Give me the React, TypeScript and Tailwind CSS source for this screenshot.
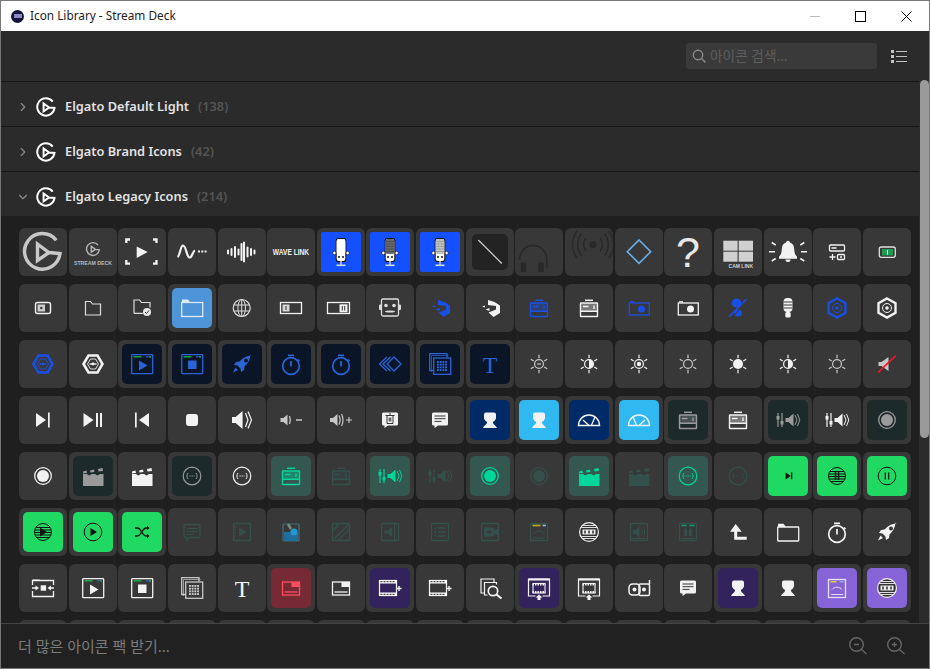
import type { ReactNode } from "react"
import { ChevronDown, ChevronRight } from "lucide-react"

/** Part of an icon that is filled with the tile's colour. */
function Fill({ children }: { children: ReactNode }) {
  return <g fill="currentColor" stroke="none">{children}</g>
}

const logoPath = "M37.3 12.3A17.8 17.8 0 1 0 41 25.5L30 24.5L18.5 16V32.5L30 24.5"

function Mic({ head, grain }: { head: string; grain?: string }) {
  return (
    <g stroke="none">
      <circle cx="17.5" cy="25" r="1.8" fill="#fff" stroke="#111" strokeWidth=".6" />
      <circle cx="30.5" cy="25" r="1.8" fill="#fff" stroke="#111" strokeWidth=".6" />
      <rect x="18.7" y="10" width="10.6" height="24" rx="2.8" fill="#111" />
      <rect x="19.7" y="11" width="8.6" height="22" rx="2" fill="#fff" />
      <rect x="19.7" y="11" width="8.6" height="15" rx="2" fill={head} />
      {grain && <path d="M20.5 13.5h7M20.5 16h7M20.5 18.5h7M20.5 21h7M20.5 23.5h7" stroke={grain} strokeWidth="1" strokeDasharray="1 1" />}
      <circle cx="22" cy="29" r="1" fill="#111" />
      <circle cx="26" cy="29" r="1" fill="#111" />
      <rect x="23" y="33" width="2" height="4" fill="#aab" />
      <rect x="19.5" y="36.5" width="9" height="1.6" fill="#cdd" />
    </g>
  )
}

function Sun({ children }: { children: ReactNode }) {
  return (
    <>
      <path d="M24 14.8v3.4M24 29.8v3.4M15.8 19.3l3 1.7M32.2 19.3l-3 1.7M15.8 28.7l3-1.7M32.2 28.7l-3-1.7" strokeWidth="1.2" />
      {children}
    </>
  )
}

/** Square window used by the dim icons of row six. */
function Box({ children }: { children: ReactNode }) {
  return (
    <>
      <rect x="15.5" y="15.5" width="17" height="17" rx=".8" strokeWidth="1.3" />
      {children}
    </>
  )
}

/** Window with the two coloured bars on top. */
function Win({ children, left = "#1fc24a", right = "#2a6bd6" }: { children: ReactNode; left?: string; right?: string }) {
  return (
    <>
      <rect x="13.7" y="14.7" width="21" height="19" rx=".8" strokeWidth="1.3" />
      <path d="M15.5 16.8h8" stroke={left} strokeWidth="1.2" />
      <path d="M28 16.8h2.5" stroke={right} strokeWidth="1.2" />
      <path d="M31 16.8h2" stroke={left} strokeWidth="1.2" />
      {children}
    </>
  )
}

const speaker = "M14 21h3.6l7-6v18l-7-6H14z"
const chatBubble = "M17.5 16.5h13a1.5 1.5 0 0 1 1.5 1.5v10a1.5 1.5 0 0 1-1.5 1.5H22l-3.5 2.5v-2.5h-1a1.5 1.5 0 0 1-1.5-1.5V18a1.5 1.5 0 0 1 1.5-1.5z"
const person = "M20 16.5h8a2 2 0 0 1 2 2V22c0 2-2 3-3 4v.5c0 2 3 3 4 5.5H17c1-2.5 4-3.5 4-5.5V26c-1-1-3-2-3-4v-3.5a2 2 0 0 1 2-2z"
const rocket = "M33.5 15.5c-5 .3-9 2.5-12 6l-3.5.5-2 3 3.5.5 3 3 .5 3.5 3-2 .5-3.5c3.5-3 5.7-7 6-12zM28 18.5a2 2 0 1 1 0 4 2 2 0 0 1 0-4zM17.5 27.5l-2.5 5 5-2.5z"
const clapTop = "M14 19.5l3.5-1 .5 2.5-4 .5zM21 18.5l4-1 .5 2.5-4 .5zM29 17l4.5-1 .5 3-4.5.5z"

function Stopwatch() {
  return (
    <>
      <circle cx="24" cy="26" r="8.3" strokeWidth="1.7" />
      <path d="M21 15.3h6M24 21v5.5M31 19.5l1.5 1.5" strokeWidth="1.7" />
    </>
  )
}

function StackGrid() {
  const dots = [0, 1, 2, 3]
  return (
    <>
      <path d="M17 30.5h-3.3V13.7H31v3.8" strokeWidth="1.3" />
      <path d="M15.5 32V15.5h17" strokeWidth="1" opacity=".7" />
      <rect x="17.7" y="18" width="17" height="16.3" strokeWidth="1.3" />
      <Fill>
        {dots.map((r) => dots.map((c) => <rect key={`${r}-${c}`} x={21 + c * 2.7} y={21 + r * 2.7} width="1.9" height="1.9" />))}
      </Fill>
    </>
  )
}

function Stripes() {
  return (
    <>
      <circle cx="24" cy="24" r="8.5" strokeWidth="1" />
      <path d="M17 19.5h14M16 22h16M16 24.5h16M16 27h16M17.5 29.5h13" strokeWidth="1" />
    </>
  )
}

function Film() {
  return (
    <>
      <rect x="13.5" y="16.5" width="17" height="15" strokeWidth="1.2" />
      <rect x="13" y="16" width="18" height="3.5" fill="#fff" stroke="none" />
      <rect x="13" y="28.5" width="18" height="3.5" fill="#fff" stroke="none" />
      <path d="M14.5 17.7h15M14.5 30.3h15" stroke="#444" strokeWidth="1.3" strokeDasharray="2 1" />
      <path d="M33 22v5M30.5 24.5h5" strokeWidth="1.4" />
    </>
  )
}

function SceneUp() {
  return (
    <>
      <path d="M20.5 32h-7V15h21v17h-7" strokeWidth="1.2" />
      <rect x="13.5" y="14.5" width="21" height="2" fill="currentColor" stroke="none" />
      <rect x="18" y="19.5" width="12" height="9.5" strokeWidth="1.1" />
      <path d="M17.5 20.5h13M17.5 28h13" strokeWidth="2" strokeDasharray="1.5 1" />
      <Fill><path d="M24 30.5l3.5 3h-2V36h-3v-2.5h-2z" /></Fill>
    </>
  )
}

function Reel() {
  return (
    <g stroke="none">
      <circle cx="24" cy="24" r="10" fill="#f2f2f2" />
      <circle cx="24" cy="24" r="8.8" fill="#333" />
      <path d="M17 17.5h14M16 19.5h16M16 28.5h16M17 30.5h14" stroke="#ddd" strokeWidth="1" />
      <rect x="17.5" y="21.5" width="13" height="5" fill="#eee" />
      <path d="M20 22.5v3M24 22.5v3M28 22.5v3" stroke="#222" strokeWidth="1.4" />
    </g>
  )
}

function Mixer() {
  return (
    <>
      <path d="M14 17v14M18 17v14" strokeWidth="1.2" />
      <Fill>
        <rect x="12.5" y="20" width="3" height="3.5" />
        <rect x="16.5" y="25" width="3" height="3.5" />
        <path d="M21.5 22h3l5-4.5v13l-5-4.5h-3z" />
      </Fill>
      <path d="M31 19l2 5-2 5M33.5 18l2.3 6-2.3 6" strokeWidth="1" />
    </>
  )
}

function Printer() {
  return (
    <>
      <path d="M20 16.3h8" strokeWidth="1.5" />
      <rect x="15.5" y="19" width="17" height="13.5" rx=".5" strokeWidth="1.4" />
      <rect x="15.5" y="19" width="17" height="8" fill="currentColor" opacity=".35" stroke="none" />
      <path d="M15.5 27.3h17M18 22.5h5.5M29 21.5V25" strokeWidth="1.4" />
    </>
  )
}

function Clapper() {
  return (
    <Fill>
      <path d={clapTop} />
      <path d="M14 22h4l2 1.5 3-1.5h3l2.5 1.5 2.5-1.5h3.500v12H14z" />
    </Fill>
  )
}

function Broadcast() {
  return (
    <>
      <circle cx="24" cy="24" r="8.8" strokeWidth="1.2" />
      <path d="M20 21c-1.4 1.7-1.4 4.3 0 6M28 21c1.4 1.7 1.4 4.3 0 6" strokeWidth="1" />
      <path d="M21.5 24h5" strokeWidth="1" strokeDasharray="1.2 .9" />
    </>
  )
}

function Gauge() {
  return (
    <>
      <path d="M13.5 29.5a10.5 10.5 0 1 1 21 0z" strokeWidth="1.5" />
      <path d="M18 24l6 5.5M30 21l-3.500 8" strokeWidth="1.3" />
    </>
  )
}

function Hex({ children }: { children: ReactNode }) {
  return (
    <>
      <path d="M24 14.5l8.5 4.8v9.4L24 33.5l-8.5-4.8v-9.4z" strokeWidth="2.4" />
      {children}
    </>
  )
}

function WideHex() {
  return (
    <>
      <path d="M14.5 24l5-8.5h9l5 8.5-5 8.5h-9z" strokeWidth="2.6" />
      <path d="M18.5 24l3-5h5l3 5-3 5h-5z" strokeWidth=".9" />
      <path d="M20.5 24h7" strokeWidth="1.4" />
      <Fill><circle cx="24" cy="24" r="1.4" /></Fill>
    </>
  )
}

function WinCard() {
  return (
    <>
      <rect x="15.5" y="18" width="17" height="13" strokeWidth="1.3" />
      <Fill><rect x="24.5" y="18" width="8" height="5" /></Fill>
      <path d="M17.5 28h13" strokeWidth="1.3" />
    </>
  )
}

const icons: Record<string, ReactNode> = {
  logoBig: <path d={logoPath} strokeWidth="3.4" />,
  deck: (
    <>
      <g transform="translate(15.6 12.6) scale(.36)"><path d={logoPath} strokeWidth="3.8" /></g>
      <text x="24" y="37" textAnchor="middle" fontSize="5.2" fontWeight="700" fill="currentColor" stroke="none" fontFamily="Liberation Sans">STREAM DECK</text>
    </>
  ),
  brackets: (
    <>
      <path d="M12 11.5H8.3V15M8.3 32v3.700H12M35 11.5h3.500V15M38.500 32v3.700H35" strokeWidth="2.3" />
      <Fill><path d="M18.7 18.500l11 5.500-11 6z" /></Fill>
    </>
  ),
  wave: (
    <>
      <path d="M9.5 29c2.500-1 2.700-11 5.500-11.500 3-.3 3.500 11.500 6.500 12 2.800.3 3-6.500 5.500-7" strokeWidth="2.2" />
      <path d="M30 23.5h9.500" strokeWidth="2" strokeDasharray="2 1.3" />
    </>
  ),
  bars: <path d="M10 22.5v3M13.5 21v6M17 19v10M20.5 21.500v5M23.5 16v16M26 14.500v19M29.500 19.500v9M33 21v6M36.500 22.500v3" strokeWidth="2" strokeLinecap="round" />,
  waveLink: (
    <text transform="translate(24 27) scale(.8 1)" textAnchor="middle" fontSize="8.3" fontWeight="700" fill="currentColor" stroke="none" fontFamily="Liberation Sans">WAVE LINK</text>
  ),
  mic1: <Mic head="#fff" />,
  mic2: <Mic head="#6a6a6a" grain="#333" />,
  mic3: <Mic head="#c4c4c4" grain="#777" />,
  slashLine: <path d="M12.3 12l23.5 23.5" strokeWidth="1.3" />,
  headphones: (
    <>
      <path d="M4.7 32v-1a13.5 13.5 0 0 1 27 0v9" strokeWidth="1.5" />
      <Fill><rect x="5.7" y="34.5" width="5.5" height="9.5" rx="1" /><rect x="23.3" y="34.5" width="5.5" height="9.5" rx="1" /></Fill>
    </>
  ),
  airwaves: (
    <>
      <Fill><circle cx="28" cy="16.5" r="3.5" /></Fill>
      <path d="M21 10c-3 4-3 9 0 13M35 10c3 4 3 9 0 13M16.5 5.5c-5 6-5 16 0 22M39.5 5.5c5 6 5 16 0 22M12 3c-6 8-6 19 0 27M44 3c6 8 6 19 0 27" strokeWidth="1.5" />
    </>
  ),
  diamond: <path d="M24 12l11.7 11.7L24 35.4 12.3 23.7z" strokeWidth="1.6" />,
  question: <text x="24" y="39" textAnchor="middle" fontSize="43" fill="currentColor" stroke="none" fontFamily="Liberation Sans">?</text>,
  camLink: (
    <>
      <Fill>
        <rect x="9.3" y="12.7" width="14.3" height="10" />
        <rect x="24.7" y="12.7" width="14.3" height="10" />
        <rect x="9.3" y="23.7" width="14.3" height="10" />
        <rect x="24.7" y="23.7" width="14.3" height="10" />
      </Fill>
      <text x="39" y="40.3" textAnchor="end" fontSize="5" fontWeight="700" fill="currentColor" stroke="none" fontFamily="Liberation Sans">CAM LINK</text>
    </>
  ),
  bell: (
    <>
      <Fill><path d="M24 12.7c-1.100 0-1.800.8-1.900 1.700-3.100.9-4.300 3.500-4.300 6.600 0 4.200-1.300 6.200-2.800 7.800v2h18v-2c-1.500-1.600-2.800-3.600-2.800-7.800 0-3.100-1.200-5.700-4.300-6.600-.1-.9-.8-1.700-1.900-1.700zM21.500 31.500h5a2.500 2.500 0 0 1-5 0z" /></Fill>
      <path d="M5 23.7h6M37 23.7h6M7.7 14.500l4 2.500M40.300 14.500l-4 2.500M7.7 33l4-2.500M40.300 33l-4-2.500" strokeWidth="1.5" />
    </>
  ),
  controls: (
    <>
      <rect x="16.5" y="17" width="15" height="6" rx="1" strokeWidth="1.3" />
      <path d="M18.5 20h5M16.5 29h6M19.5 26v6" strokeWidth="1.3" />
      <rect x="24.5" y="26.5" width="7" height="5" rx="1" strokeWidth="1.3" />
      <path d="M27 29h2" strokeWidth="1.3" />
    </>
  ),
  battery: (
    <>
      <rect x="16.3" y="19" width="16" height="10.3" rx="2" strokeWidth="1.3" />
      <rect x="19" y="21" width="11" height="6.5" fill="#1f9c52" stroke="none" />
      <path d="M24.5 22v4.500" stroke="#fff" strokeWidth="1" />
    </>
  ),
  tag: (
    <>
      <rect x="16.5" y="18.5" width="15" height="11" rx="2" strokeWidth="1.4" />
      <Fill><rect x="18.5" y="20.5" width="7.5" height="7" opacity=".8" /></Fill>
      <circle cx="22.3" cy="24" r="1.2" fill="#333" stroke="none" />
    </>
  ),
  folder: <path d="M16.5 31h15V20h-8l-2-2.500h-5z" strokeWidth="1.2" />,
  folderCheck: (
    <>
      <path d="M16 29.3V16h5.500l2 2.500h8.500v5M16 29.300h9" strokeWidth="1.2" />
      <circle cx="29" cy="28" r="4" fill="#e8e8e8" stroke="none" />
      <path d="M27 28l1.500 1.500 2.500-3" stroke="#333" strokeWidth="1" />
    </>
  ),
  folderBig: (
    <>
      <rect x="13.7" y="18.5" width="21" height="14" strokeWidth="1.3" />
      <Fill><path d="M14 18.5v-3h6l2 3z" /></Fill>
    </>
  ),
  globe: (
    <>
      <circle cx="23.7" cy="24" r="8.5" strokeWidth="1.2" />
      <ellipse cx="23.7" cy="24" rx="3.8" ry="8.5" strokeWidth="1" />
      <path d="M15.5 21H32M15.5 27H32M23.7 15.5v17" strokeWidth="1" />
    </>
  ),
  toggleL: (
    <>
      <rect x="13.5" y="18.5" width="21" height="11" strokeWidth="1.3" />
      <Fill><rect x="15.5" y="20.5" width="7" height="7" opacity=".85" /></Fill>
      <path d="M19 22v4" stroke="#333" strokeWidth="1" />
    </>
  ),
  toggleR: (
    <>
      <rect x="10.5" y="18.5" width="22" height="11" strokeWidth="1.3" />
      <Fill><rect x="22.5" y="20.3" width="8" height="8" /></Fill>
      <path d="M25.3 22v4.500M27.7 22v4.500" stroke="#333" strokeWidth="1" />
    </>
  ),
  robot: (
    <>
      <rect x="15.5" y="15" width="17" height="17" rx="1.5" strokeWidth="1.3" />
      <Fill>
        <rect x="13" y="20.5" width="2.5" height="5.5" rx="1" />
        <rect x="32.5" y="20.5" width="2.5" height="5.5" rx="1" />
        <circle cx="20" cy="21.5" r="1.8" />
        <circle cx="28" cy="21.5" r="1.8" />
        <ellipse cx="24" cy="27.5" rx="5" ry="1.1" />
      </Fill>
    </>
  ),
  dash: (
    <Fill>
      <path d="M22 16l6.500 2 5.500 3.500V29l-6.500 4-5-4.500 7.500-3v-3.500l-8-1z" />
      <path d="M16 22.500l3-1v2zM19.500 25.500l4-1.500v3z" />
    </Fill>
  ),
  printer: <Printer />,
  cam: (
    <>
      <path d="M15 17.8h4" strokeWidth="1.3" />
      <rect x="14.3" y="19" width="20" height="12" strokeWidth="1.3" />
      <Fill><circle cx="26.5" cy="25" r="3.5" /></Fill>
    </>
  ),
  micSlash: (
    <>
      <Fill>
        <ellipse cx="22.5" cy="19" rx="4.8" ry="4.5" />
        <ellipse cx="24" cy="29" rx="4" ry="3.5" />
      </Fill>
      <path d="M15 32.7L32.7 15" strokeWidth="1.6" />
      <path d="M18 33l15-15" strokeWidth="1" stroke="#383838" />
    </>
  ),
  mike: (
    <>
      <Fill><rect x="19.5" y="14" width="9" height="14" rx="4" /><rect x="21.3" y="28" width="5.4" height="5.5" rx="1.5" /></Fill>
      <path d="M19.5 18h9M19.5 21h9M19.5 24h9" stroke="#383838" strokeWidth="1" />
    </>
  ),
  hexCore: <Hex><circle cx="24" cy="24" r="4.5" strokeWidth="1" /><Fill><circle cx="24" cy="24" r="1.8" /></Fill></Hex>,
  wideHex: <WideHex />,
  winPlay: <Win><Fill><path d="M21 20.5l8.500 5-8.500 5z" /></Fill></Win>,
  winStop: <Win><Fill><rect x="20" y="20.5" width="8.5" height="8.5" /></Fill></Win>,
  rocket: <Fill><path fillRule="evenodd" d={rocket} /></Fill>,
  stopwatch: <Stopwatch />,
  chevrons: <path d="M35 24l-7-7-7 7 7 7zM21 17l-7.500 7 7.500 7M24.500 17L17 24l7.500 7" strokeWidth="1.3" />,
  stack: <StackGrid />,
  serifT: <text x="24" y="32.5" textAnchor="middle" fontSize="24" fill="currentColor" stroke="none" fontFamily="Liberation Serif">T</text>,
  sunMinus: <Sun><circle cx="24" cy="24" r="4.4" strokeWidth="1.2" /><path d="M22 24h4" strokeWidth="1.2" /></Sun>,
  sunHalf: <Sun><circle cx="24" cy="24" r="4.4" strokeWidth="1.2" /><Fill><path d="M24 19.6a4.4 4.4 0 0 1 0 8.800z" /></Fill></Sun>,
  sunDot: <Sun><circle cx="24" cy="24" r="4.4" strokeWidth="1.2" /><Fill><circle cx="24" cy="24" r="2.2" /></Fill></Sun>,
  sunRing: <Sun><circle cx="24" cy="24" r="4.4" strokeWidth="1.2" /></Sun>,
  sunFull: <Sun><Fill><circle cx="24" cy="24" r="5" /></Fill></Sun>,
  mute: (
    <>
      <Fill><path d="M15.5 22h3l7-5v14l-7-5h-3z" /></Fill>
      <path d="M15.3 32.3l17.400-16.600" stroke="#f01824" strokeWidth="1.6" />
    </>
  ),
  next: <Fill><path d="M17 17l10 7-10 7z" /><rect x="29" y="16.5" width="1.7" height="15" /></Fill>,
  playPause: <Fill><path d="M14.5 17l10 7-10 7z" /><rect x="27" y="17" width="2" height="14" /><rect x="31" y="17" width="2" height="14" /></Fill>,
  prev: <Fill><path d="M31 17l-10 7 10 7z" /><rect x="17" y="16.5" width="1.7" height="15" /></Fill>,
  stop: <Fill><rect x="18" y="18" width="12" height="12" rx="3" /></Fill>,
  volume: (
    <>
      <Fill><path d={speaker} /></Fill>
      <path d="M27.5 17l2.500 7-2.500 7M30 15.500l3.500 8.500-3.500 8.500" strokeWidth="1.2" />
    </>
  ),
  volDown: (
    <>
      <Fill><path d="M13.5 22h3l4-3.500v11l-4-3.500h-3z" /></Fill>
      <path d="M22.5 20c1 2.500 1 5.500 0 8M29 24h6" strokeWidth="1.3" />
    </>
  ),
  volUp: (
    <>
      <Fill><path d="M13 22h3l4.500-4v12l-4.500-4h-3z" /></Fill>
      <path d="M22 19.5c1.500 3 1.500 6 0 9M24.500 18c2 4 2 8 0 12M29 24h6M32 21v6" strokeWidth="1.2" />
    </>
  ),
  chatTrash: (
    <>
      <Fill><path d={chatBubble} /></Fill>
      <path d="M19.5 19.5h9M21 19.500v8h6v-8M23 18h2M23.200 21.500v4M24.800 21.500v4" stroke="#333" strokeWidth="1" />
    </>
  ),
  chat: (
    <>
      <Fill><path d={chatBubble} /></Fill>
      <path d="M18.5 20h11M18.500 22.700h11M18.500 25.400h7" stroke="#333" strokeWidth="1" />
    </>
  ),
  chatDim: (
    <>
      <path d={chatBubble} strokeWidth="1.3" />
      <path d="M18.5 20.5h11M18.500 23.500h11M18.500 26.500h7" strokeWidth="1" />
    </>
  ),
  person: <Fill><path d={person} /></Fill>,
  gauge: <Gauge />,
  gaugeFlip: <g transform="translate(48 0) scale(-1 1)"><Gauge /></g>,
  mixer: <Mixer />,
  ringFill: <><circle cx="24" cy="24" r="8.3" strokeWidth="1.3" /><Fill><circle cx="24" cy="24" r="6" /></Fill></>,
  clapper: <Clapper />,
  broadcast: <Broadcast />,
  smallNext: <Fill><path d="M21.7 20.5l5 3.500-5 3.500z" /><rect x="27" y="20.3" width="1.3" height="7" /></Fill>,
  stripePause: <><Stripes /><Fill><rect x="21.8" y="20" width="1.5" height="8" /><rect x="24.8" y="20" width="1.5" height="8" /></Fill></>,
  pauseCircle: (
    <>
      <circle cx="24" cy="24" r="8.8" strokeWidth="1" />
      <path d="M22.3 20.5v7M25.700 20.500v7" strokeWidth="1.2" />
    </>
  ),
  stripePlay: <><Stripes /><Fill><path d="M21 19.5l7 4.500-7 4.500z" /></Fill></>,
  playCircle: <><circle cx="24" cy="24" r="8.8" strokeWidth="1" /><Fill><path d="M21.5 20l6.500 4-6.500 4z" /></Fill></>,
  shuffle: (
    <>
      <path d="M17 20h2.500c3.500 0 5 8 8.500 8h2M17 28h2.500c3.500 0 5-8 8.500-8h2" strokeWidth="1.3" />
      <Fill><path d="M29 17.7l2.500 2.300-2.500 2.300zM29 25.700l2.500 2.300-2.500 2.300z" /></Fill>
    </>
  ),
  boxPlay: <Box><path d="M15.5 19h3M15.500 22h3M15.500 25h3M15.500 28h3" strokeWidth="1" /><Fill><path d="M21 19.5l8 4.500-8 4.500z" /></Fill></Box>,
  app: (
    <>
      <rect x="16" y="16" width="16" height="17" rx="1" stroke="#4a6c75" strokeWidth="1.2" />
      <path d="M17 33h14v-9H17z" fill="#1e6f9c" stroke="none" />
      <circle cx="27" cy="24" r="3.5" fill="#1d9ad6" stroke="none" />
      <path d="M21 16l3 5" stroke="#7a8a80" strokeWidth="2.5" />
    </>
  ),
  boxSlash: <Box><path d="M15.5 32.5l17-17M21 32.500L32.500 21M15.500 20v3l6-6h-3" strokeWidth="1.2" /></Box>,
  boxSpeaker: <Box><Fill><path d="M18.5 22.5h3l4.500-3.500v10l-4.500-3.500h-3z" /></Fill><path d="M28.5 16v16" strokeWidth="1" /></Box>,
  boxList: <Box><path d="M18.5 20h2M18.500 24h2M18.500 28h2M22 20h7.500M22 24h7.500M22 28h7.500" strokeWidth="1.5" /></Box>,
  boxCam: <Box><Fill><path d="M18 19.5h10v3l4-2v7l-4-2v3H18z" /></Fill><ellipse cx="23" cy="24" rx="2.5" ry="1.5" fill="#383838" stroke="none" /></Box>,
  boxArc: (
    <Box>
      <path d="M17.5 17.5h8" stroke="#b8a81e" strokeWidth="1.7" />
      <path d="M27.5 17.5H31" stroke="#8ab4d6" strokeWidth="1.7" />
      <path d="M18.5 26c2-4 9-4 11 0M18 30h12" strokeWidth="1" />
    </Box>
  ),
  reel: <Reel />,
  boxVol: <Box><Fill><path d="M18 22h2.500l4-3.500v11l-4-3.500H18z" /></Fill><path d="M26.5 20.5c1 2 1 5 0 7M28.500 19c1.500 3 1.500 7 0 10M17 30.500h14" strokeWidth="1" /></Box>,
  boxPause: (
    <Box>
      <path d="M17.5 17.5h5M25.500 17.500h5" stroke="#0c9c74" strokeWidth="1.5" />
      <Fill><rect x="20.5" y="20.5" width="2.5" height="7.5" /><rect x="25" y="20.5" width="2.5" height="7.5" /></Fill>
      <path d="M17.5 30.5h13" strokeWidth="1" />
    </Box>
  ),
  upCorner: (
    <>
      <Fill><path d="M16 23.7L21.700 16l6 7.700z" /></Fill>
      <path d="M21.7 23v7.200h11" strokeWidth="3" />
    </>
  ),
  folderWide: (
    <>
      <rect x="13.7" y="19" width="21" height="14" rx=".5" strokeWidth="1.3" />
      <Fill><path d="M14 19v-3.300h5.500l2.500 3.300z" /></Fill>
    </>
  ),
  folderArrows: (
    <>
      <path d="M13.5 21v-4.500h21V21M13.500 27v5.500h21V27" strokeWidth="1.3" />
      <path d="M13 24h4M31 24h4" strokeWidth="1.5" />
      <Fill>
        <path d="M14 15.5h6l1.500 1h-8z" />
        <rect x="21.7" y="21.3" width="5.4" height="5.4" />
        <path d="M16.5 21.5l3.500 2.500-3.500 2.500zM32 21.500L28.500 24l3.500 2.500z" />
      </Fill>
    </>
  ),
  winCard: <WinCard />,
  film: <Film />,
  stackSearch: (
    <>
      <path d="M18 29h-3V15h13v3" strokeWidth="1.2" />
      <path d="M21.5 31h-3V18.500h12v2" strokeWidth="1.2" />
      <circle cx="27" cy="27" r="4.7" strokeWidth="1.7" />
      <path d="M30.5 30.5l5 4" strokeWidth="2.2" />
    </>
  ),
  sceneUp: <SceneUp />,
  adLogo: (
    <>
      <rect x="14" y="20" width="11" height="11" rx="3.5" strokeWidth="1.5" />
      <rect x="24" y="20" width="10.5" height="11.5" rx="1.5" strokeWidth="1.5" />
      <path d="M34.5 20v-4" strokeWidth="1.5" />
      <Fill><circle cx="19.5" cy="25.5" r="2" /><circle cx="29" cy="25.5" r="2" /></Fill>
    </>
  ),
  winArc: (
    <>
      <rect x="15.5" y="15.5" width="17" height="18" strokeWidth="1.3" />
      <path d="M17.5 17.7h6" stroke="#e6d23c" strokeWidth="1.5" />
      <path d="M26.5 17.7h4" stroke="#8ab4e6" strokeWidth="1.5" />
      <path d="M19 25.5c2-3 8-3 10 0M18 30.500h12" strokeWidth="1" />
    </>
  ),
}

// Colours of the icons
const WHITE = "text-[#f2f2f2]"
const GREY = "text-[#c8c8c8]"
const BLUE = "text-[#1a4fe6]"
const NAVY_ICON = "text-[#2c63d6]"
const TEAL = "text-[#00d69a]"
const DIM = "text-[#33504a]"
const MUTED = "text-[#9a9a9a]"
const BLACK = "text-[#111111]"
const DARK = "text-[#292929]"

// Backgrounds drawn inside a tile
const ROYAL = "size-10 rounded-[2px] bg-[#1450ff]"
const MIDNIGHT = "size-10 rounded-[5px] bg-[#0a1628]"
const PANEL = "size-9 rounded-[5px] bg-[#232323]"
const SKY_FOLDER = "size-10 rounded-[5px] bg-[#4d94d9]"
const OCEAN = "size-10 rounded-[5px] bg-[#002b66]"
const SKY = "size-10 rounded-[5px] bg-[#2fb9f0]"
const SLATE = "size-10 rounded-[5px] bg-[#1d2a2a]"
const SEA = "size-10 rounded-[5px] bg-[#34574f]"
const GREEN = "size-10 rounded-[5px] bg-[#1fd962]"
const MAROON = "size-10 rounded-[5px] bg-[#762a33]"
const PURPLE = "size-10 rounded-[5px] bg-[#33235c]"
const VIOLET = "size-10 rounded-[5px] bg-[#8763d8]"

type TileData = [icon: string, color: string, inner?: string]

/** Every tile of the grid, seven rows of eighteen. */
const tiles: TileData[] = [
  ["logoBig", GREY], ["deck", "text-[#b8b8b8]"], ["brackets", WHITE], ["wave", WHITE], ["bars", WHITE], ["waveLink", WHITE],
  ["mic1", WHITE, ROYAL], ["mic2", WHITE, ROYAL], ["mic3", WHITE, ROYAL], ["slashLine", GREY, PANEL], ["headphones", DARK], ["airwaves", DARK],
  ["diamond", "text-[#6aaee6]"], ["question", "text-[#e8e8e8]"], ["camLink", "text-[#d0d0d0]"], ["bell", WHITE], ["controls", WHITE], ["battery", "text-[#e0e0e0]"],

  ["tag", WHITE], ["folder", "text-[#dddddd]"], ["folderCheck", "text-[#dddddd]"], ["folderBig", "text-[#dfeaf6]", SKY_FOLDER], ["globe", "text-[#dddddd]"], ["toggleL", WHITE],
  ["toggleR", WHITE], ["robot", "text-[#dddddd]"], ["dash", BLUE], ["dash", WHITE], ["printer", BLUE], ["printer", WHITE],
  ["cam", BLUE], ["cam", WHITE], ["micSlash", BLUE], ["mike", WHITE], ["hexCore", BLUE], ["hexCore", WHITE],

  ["wideHex", BLUE], ["wideHex", WHITE], ["winPlay", NAVY_ICON, MIDNIGHT], ["winStop", NAVY_ICON, MIDNIGHT], ["rocket", NAVY_ICON, MIDNIGHT], ["stopwatch", NAVY_ICON, MIDNIGHT],
  ["stopwatch", NAVY_ICON, MIDNIGHT], ["chevrons", NAVY_ICON, MIDNIGHT], ["stack", NAVY_ICON, MIDNIGHT], ["serifT", NAVY_ICON, MIDNIGHT], ["sunMinus", GREY], ["sunHalf", WHITE],
  ["sunDot", WHITE], ["sunRing", GREY], ["sunFull", WHITE], ["sunHalf", WHITE], ["sunRing", GREY], ["mute", GREY],

  ["next", WHITE], ["playPause", WHITE], ["prev", WHITE], ["stop", WHITE], ["volume", WHITE], ["volDown", GREY],
  ["volUp", GREY], ["chatTrash", WHITE], ["chat", WHITE], ["person", WHITE, OCEAN], ["person", WHITE, SKY], ["gauge", WHITE, OCEAN],
  ["gaugeFlip", WHITE, SKY], ["printer", MUTED, SLATE], ["printer", WHITE], ["mixer", MUTED, SLATE], ["mixer", WHITE], ["ringFill", MUTED, SLATE],

  ["ringFill", WHITE], ["clapper", MUTED, SLATE], ["clapper", WHITE], ["broadcast", MUTED, SLATE], ["broadcast", WHITE], ["printer", TEAL, SEA],
  ["printer", DIM], ["mixer", TEAL, SEA], ["mixer", DIM], ["ringFill", TEAL, SEA], ["ringFill", DIM], ["clapper", TEAL, SEA],
  ["clapper", DIM], ["broadcast", TEAL, SEA], ["broadcast", DIM], ["smallNext", BLACK, GREEN], ["stripePause", BLACK, GREEN], ["pauseCircle", BLACK, GREEN],

  ["stripePlay", BLACK, GREEN], ["playCircle", BLACK, GREEN], ["shuffle", BLACK, GREEN], ["chatDim", DIM], ["boxPlay", DIM], ["app", DIM],
  ["boxSlash", DIM], ["boxSpeaker", DIM], ["boxList", DIM], ["boxCam", DIM], ["boxArc", DIM], ["reel", WHITE],
  ["boxVol", DIM], ["boxPause", DIM], ["upCorner", WHITE], ["folderWide", WHITE], ["stopwatch", WHITE], ["rocket", WHITE],

  ["folderArrows", WHITE], ["winPlay", WHITE], ["winStop", WHITE], ["stack", GREY], ["serifT", WHITE], ["winCard", "text-[#ff4d5f]", MAROON],
  ["winCard", WHITE], ["film", WHITE, PURPLE], ["film", WHITE], ["stackSearch", WHITE], ["sceneUp", WHITE, PURPLE], ["sceneUp", WHITE],
  ["adLogo", WHITE], ["chat", WHITE], ["person", WHITE, PURPLE], ["person", WHITE], ["winArc", "text-[#e6e0f8]", VIOLET], ["reel", WHITE, VIOLET],
]

function Tile({ data }: { data?: TileData }) {
  if (!data) return <div className="size-12 rounded-md bg-[#383838]" />
  const [icon, color, inner] = data
  const svg = (
    <svg viewBox="0 0 48 48" fill="none" stroke="currentColor" className="size-12 shrink-0">
      {icons[icon]}
    </svg>
  )
  return (
    <div className={`size-12 rounded-md bg-[#383838] flex items-center justify-center ${color}`}>
      {inner ? <div className={`flex items-center justify-center ${inner}`}>{svg}</div> : svg}
    </div>
  )
}

function ElgatoLogo() {
  return (
    <svg viewBox="3 3 41 41" fill="none" stroke="currentColor" className="w-5 h-5 text-white">
      <path d={logoPath} strokeWidth="4" />
    </svg>
  )
}

function Section({ name, count, open }: { name: string; count: number; open?: boolean }) {
  return (
    <div className="h-[45px] shrink-0 flex items-center border-t border-[#151515] pl-[15px] pt-[5px]">
      {open ? <ChevronDown className="w-3.5 h-3.5 text-[#8a8a8a]" /> : <ChevronRight className="w-3.5 h-3.5 text-[#8a8a8a]" />}
      <span className="ml-[6px]"><ElgatoLogo /></span>
      <span className="ml-[9px] text-[12.8px] font-semibold text-[#e2e2e2]">{name}</span>
      <span className="ml-[9px] text-[12.8px] font-semibold text-[#555555]">({count})</span>
    </div>
  )
}

export default function App() {
  const cells = Array.from({ length: 18 * 8 }, (_, i) => tiles[i])

  return (
    <div className="h-screen w-[930px] flex flex-col overflow-hidden border border-[#777777] bg-[#2b2b2b] [font-family:'Noto_Sans','Noto_Sans_CJK_KR',sans-serif]">
      {/* Title bar */}
      <header className="h-[30px] shrink-0 bg-white flex items-center pl-[10px]">
        <div className="w-[13px] h-[13px] rounded-full bg-[#14143c] flex items-center justify-center">
          <div className="w-[8px] h-[4px] bg-[#8a8ac0]" />
        </div>
        <span className="ml-[6px] text-[11.8px] text-[#222222]">Icon Library - Stream Deck</span>
        <div className="ml-auto flex items-center pr-[17px]">
          <svg width="11" height="11" viewBox="0 0 11 11" stroke="#bbbbbb" className="mr-[34px]"><path d="M0 5.5h10" /></svg>
          <svg width="11" height="11" viewBox="0 0 11 11" fill="none" stroke="#000000" className="mr-[35px]"><rect x=".5" y=".5" width="10" height="10" /></svg>
          <svg width="11" height="11" viewBox="0 0 11 11" stroke="#000000"><path d="M.5.5l10 10M10.5.5l-10 10" /></svg>
        </div>
      </header>

      {/* Toolbar */}
      <div className="h-[50px] shrink-0 flex items-center justify-end pr-[22px]">
        <div className="w-[191px] h-[26px] rounded-[3px] bg-[#3a3a3a] flex items-center pl-[6px]">
          <svg width="14" height="14" viewBox="0 0 14 14" fill="none" stroke="#8a8a8a" strokeWidth="1.4"><circle cx="6" cy="6" r="4.7" /><path d="M9.5 9.5l4 4" /></svg>
          <span className="ml-[4px] text-[13.7px] text-[#5d5d5d]">아이콘 검색...</span>
        </div>
        <svg width="16" height="13" viewBox="0 0 16 13" className="ml-[14px] text-[#c4c4c4]" fill="currentColor">
          <rect width="3" height="3" /><rect y="5" width="3" height="3" /><rect y="10" width="3" height="3" />
          <rect x="5" y="1" width="11" height="1" /><rect x="5" y="6" width="11" height="1" /><rect x="5" y="11" width="11" height="1" />
        </svg>
      </div>

      <div className="flex-1 min-h-0 flex">
        <main className="flex-1 min-w-0 flex flex-col overflow-hidden">
          <Section name="Elgato Default Light" count={138} />
          <Section name="Elgato Brand Icons" count={42} />
          <Section name="Elgato Legacy Icons" count={214} open />
          {/* Icon grid */}
          <div className="flex-1 min-h-0 bg-[#1f1f1f] pt-[12px] pl-[18px] pr-[8px] grid grid-cols-[repeat(18,48px)] justify-between content-start gap-y-2">
            {cells.map((t, i) => <Tile key={i} data={t} />)}
          </div>
        </main>
        {/* Scrollbar */}
        <div className="w-[10px] shrink-0 pl-[1px]">
          <div className="h-[358px] -mt-px rounded-[5px] bg-[#9a9a9a]" />
        </div>
      </div>

      {/* Footer */}
      <footer className="h-[45px] shrink-0 border-t border-[#444444] bg-[#212121] flex items-center pl-[17px] pr-[24px]">
        <span className="text-[15px] text-[#7b7b7b]">더 많은 아이콘 팩 받기...</span>
        <div className="ml-auto flex items-center gap-[20px] text-[#666666]">
          <svg width="18" height="18" viewBox="0 0 18 18" fill="none" stroke="currentColor" strokeWidth="1.4"><circle cx="7.5" cy="7.5" r="6.8" /><path d="M5 7.5h5M12.5 12.5l5 4.5" /></svg>
          <svg width="18" height="18" viewBox="0 0 18 18" fill="none" stroke="currentColor" strokeWidth="1.4"><circle cx="7.5" cy="7.5" r="6.8" /><path d="M5 7.5h5M7.5 5v5M12.5 12.5l5 4.5" /></svg>
        </div>
      </footer>
    </div>
  )
}
